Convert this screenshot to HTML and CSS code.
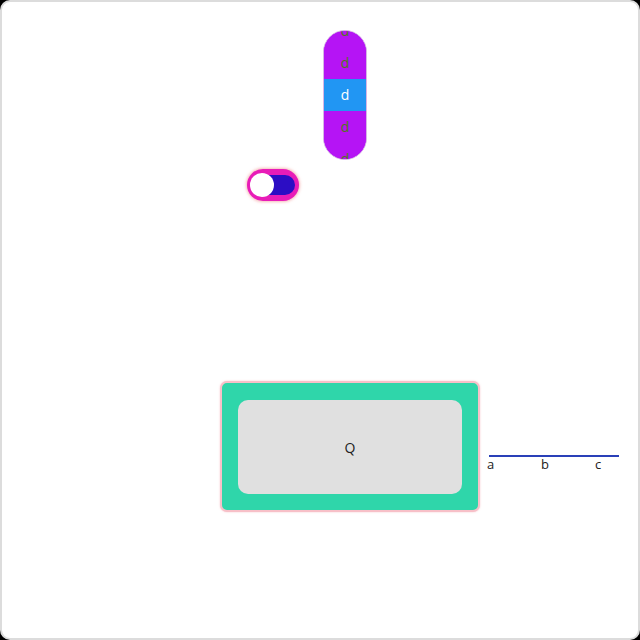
FILE: index.html
```html
<!DOCTYPE html>
<html>
<head>
<meta charset="utf-8">
<link rel="stylesheet" href="styles.css">
</head>
<body>
<div class="frame">
  <div class="picker">
    <div class="picker-list">
      <div class="picker-item">d</div>
      <div class="picker-item">d</div>
      <div class="picker-item selected">d</div>
      <div class="picker-item">d</div>
      <div class="picker-item">d</div>
    </div>
  </div>
  <div class="toggle">
    <div class="toggle-track"></div>
    <div class="toggle-knob"></div>
  </div>
  <div class="bottom-row">
    <div class="card">
      <div class="card-inner">Q</div>
    </div>
    <div class="axis">
      <div class="axis-line"></div>
      <div class="axis-labels">
        <span>a</span><span>b</span><span>c</span>
      </div>
    </div>
  </div>
</div>
</body>
</html>
```
FILE: styles.css
```css
html, body {
  margin: 0;
  padding: 0;
  background: #000;
}
.frame {
  width: 640px;
  height: 640px;
  box-sizing: border-box;
  border: 2px solid #dcdcdc;
  border-radius: 10px;
  background: #fff;
  padding-top: 28px;
  font-family: "Open Sans", "Liberation Sans", sans-serif;
  overflow: hidden;
}
.picker {
  margin-left: 321px;
  width: 44px;
  height: 130px;
  box-sizing: border-box;
  border: 1px solid #d6b6e6;
  border-radius: 22px;
  overflow: hidden;
  background: #b514f5;
}
.picker-list {
  margin-top: -16px;
}
.picker-item {
  height: 32px;
  line-height: 32px;
  text-align: center;
  font-size: 14px;
  color: #4f7a14;
  background: #b514f5;
}
.picker-item.selected {
  background: #2196f3;
  color: #fff;
}
.toggle {
  margin-top: 9px;
  margin-left: 245px;
  width: 52px;
  height: 32px;
  box-sizing: border-box;
  border-radius: 16px;
  background: #e81cb8;
  box-shadow: 0 0 3px 1px rgba(240, 140, 140, 0.6);
  display: flex;
  align-items: center;
  padding: 0 4px 0 3px;
  position: relative;
}
.toggle-track {
  flex: 1;
  height: 20px;
  margin-left: 10px;
  border-radius: 10px;
  background: #2c0dc4;
}
.toggle-knob {
  position: absolute;
  left: 3px;
  top: 4px;
  width: 24px;
  height: 24px;
  border-radius: 50%;
  background: #fff;
}
.bottom-row {
  margin-top: 180px;
  margin-left: 218px;
  display: flex;
  align-items: flex-start;
}
.card {
  width: 260px;
  height: 131px;
  box-sizing: border-box;
  border: 2px solid #f7c0c8;
  border-radius: 7px;
  background: #2fd6aa;
  box-shadow: 0 0 2px rgba(245, 170, 180, 0.7);
  padding: 17px 16px 0 16px;
}
.card-inner {
  width: 224px;
  height: 94px;
  border-radius: 10px;
  background: #e0e0e0;
  display: flex;
  align-items: center;
  justify-content: center;
  font-size: 14px;
  color: #222;
}
.axis {
  margin-top: 74px;
  margin-left: 6px;
  display: flex;
  flex-direction: column;
}
.axis-line {
  margin-left: 3px;
  width: 130px;
  height: 2px;
  background: #2a40b8;
}
.axis-labels {
  display: grid;
  grid-template-columns: 54px 54px 54px;
  font-size: 13px;
  line-height: 14px;
  color: #222;
  padding-left: 1px;
}
```
